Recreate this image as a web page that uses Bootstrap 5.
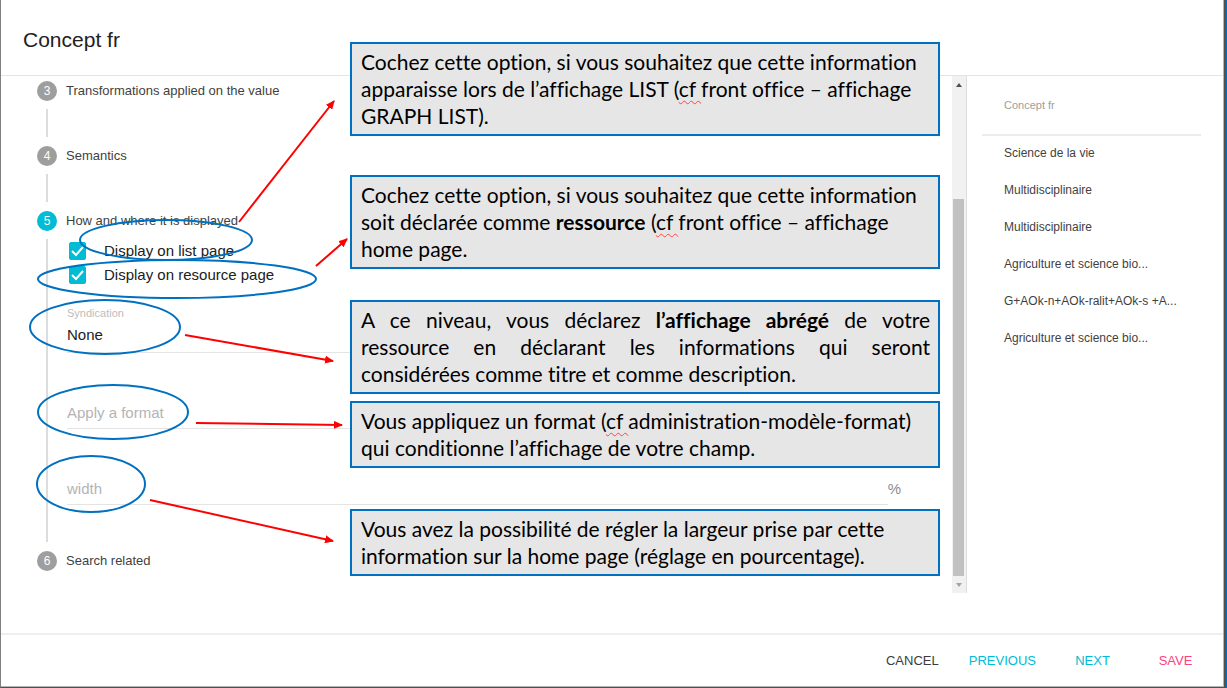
<!DOCTYPE html>
<html lang="fr">
<head>
<meta charset="utf-8">
<meta name="viewport" content="width=device-width, initial-scale=1">
<title>Concept fr</title>
<link href="https://cdn.jsdelivr.net/npm/bootstrap@5.3.0/dist/css/bootstrap.min.css" rel="stylesheet">
<style>
  body { font-family: "Liberation Sans", Arial, sans-serif; background: #0070c0; color: #212121; padding-right: 1px; }
  .editor { background: #fff; border: 1px solid #7f7f7f; border-width: 0 2px 1px 1px; border-right-color: #505050; border-bottom-color: #505050; box-shadow: inset -1px -1px #b4b4b4; }
  .editor-head { border-bottom: 1px solid #e4e4e4; height: 76px; padding: 4px 22px 0; margin-right: 1px; }
  .editor-head h1 { font-size: 21px; line-height: 28px; }
  .editor-foot { border-top: 2px solid #efefef; margin: 40px 1px 0 0; padding: 8px 6px 8px 0; }
  .flat { border: 0; border-radius: 2px; font-size: 13px; line-height: 24px; min-width: 83px; padding: 6px 15px; color: #3c3c3c; }
  .flat-cyan { color: #00bcd4; }
  .flat-pink { color: #ff4081; }

  .steps { padding-left: 36px; }
  .step-title { height: 30px; font-size: 13px; gap: 9px; color: #3f3f3f; }
  .step-no { width: 20px; height: 20px; border-radius: 50%; background: #9e9e9e; color: #fff; font-size: 12px; line-height: 20px; text-align: center; }
  .step-no.on { background: #00bcd4; }
  .step-line { margin: 3px 0 4px 9px; border-left: 2px solid #dcdcdc; min-height: 28px; }
  .step-body { padding: 0 20px 37px 19px; }

  .tick { gap: 18px; height: 24px; padding-left: 2px; font-size: 15px; }
  .tick .form-check-input { width: 17px; height: 18px; margin: 0; border-radius: 2px; border-color: #00bcd4; }
  .tick .form-check-input:checked { background-color: #00bcd4; background-size: 17px; background-image: url("data:image/svg+xml,%3csvg xmlns='http://www.w3.org/2000/svg' viewBox='0 0 17 18'%3e%3cpath d='M3 9l4 4L14 5' fill='none' stroke='%23fff' stroke-width='2'/%3e%3c/svg%3e"); }
  .field-label { font-size: 11px; line-height: 20px; color: #bdbdbd; }
  .field { border: 0; border-bottom: 1px solid #e4e4e4; border-radius: 0; padding: 0; height: 32px; font-size: 15px; line-height: 24px; background: none; color: #212121; }
  .field::placeholder { color: #b4b4b4; }
  .field-gap { margin-top: 44px; }
  .field-first { margin-top: 16px; }
  .field-pick { height: 30px; padding-bottom: 5px; appearance: none; }
  .unit { font-size: 15px; color: #8c8c8c; padding-right: 31px; }

  .bar { width: 15px; background: #f1f1f1; border-right: 1px solid #dedede; }
  .bar-end { height: 17px; }
  .bar-space { flex: 106 1 0; }
  .bar-thumb { flex: 377 1 0; background: #c1c1c1; margin: 0 2px 0 1px; }

  .preview { width: 257px; padding: 0 23px 0 15px; }
  .preview table { font-size: 12px; color: #3f3f3f; }
  .preview th { height: 59px; font-size: 11px; font-weight: 400; color: #9e9e9e; border-bottom: 2px solid #ececec; padding: 0 22px; }
  .preview td { height: 37px; padding: 0 0 2px 22px; max-width: 0; }

  /* Explanatory layer laid over the form */
  .marks { left: 0; top: 0; pointer-events: none; }
  .notes { left: 349px; top: 42px; width: 590px; font-family: Lato, sans-serif; font-size: 21px; line-height: 27px; font-variant-ligatures: none; color: #000; }
  .note { background: #e7e6e6; border: 2px solid #0070c0; padding: 4px 8px 5px 9px; margin: 0; white-space: nowrap; }
  .full-line { display: block; white-space: normal; text-align: justify; text-align-last: justify; }
  .note + .note { margin-top: 39px; }
  .note + .note-wide { margin-top: 31px; }
  .note-wide + .note { margin-top: 7px; }
  .note-wide + .note + .note { margin-top: 41px; }
  .typo { text-decoration: underline wavy #f44 1px; text-underline-offset: 3px; text-decoration-skip-ink: none; }
</style>
</head>
<body>
<div class="editor position-relative d-flex flex-column min-vh-100">
  <header class="editor-head d-flex align-items-center">
    <h1 class="fw-normal m-0">Concept fr</h1>
  </header>

  <main class="d-flex flex-grow-1">
    <section class="steps flex-grow-1">
      <div class="step-title d-flex align-items-center"><span class="step-no">3</span>Transformations applied on the value</div>
      <div class="step-line"></div>
      <div class="step-title d-flex align-items-center"><span class="step-no">4</span>Semantics</div>
      <div class="step-line"></div>
      <div class="step-title d-flex align-items-center"><span class="step-no on">5</span>How and where it is displayed</div>
      <div class="step-line">
        <form class="step-body">
          <div class="tick d-flex align-items-center">
            <input class="form-check-input" type="checkbox" id="onList" checked>
            <label for="onList">Display on list page</label>
          </div>
          <div class="tick d-flex align-items-center">
            <input class="form-check-input" type="checkbox" id="onResource" checked>
            <label for="onResource">Display on resource page</label>
          </div>
          <div class="field-first">
            <label class="field-label d-block" for="syndication">Syndication</label>
            <select class="field field-pick w-100 d-block" id="syndication"><option>None</option></select>
          </div>
          <input class="field field-gap w-100 d-block" type="text" placeholder="Apply a format" aria-label="Apply a format">
          <div class="field-gap d-flex align-items-center">
            <input class="field flex-grow-1" type="text" placeholder="width" aria-label="width">
            <span class="unit">%</span>
          </div>
        </form>
      </div>
      <div class="step-title d-flex align-items-center"><span class="step-no">6</span>Search related</div>
    </section>

    <div class="bar d-flex flex-column" aria-hidden="true">
      <div class="bar-end d-flex align-items-center justify-content-center"><svg width="6" height="4"><path d="M0 4h6L3 0z" fill="#505050"/></svg></div>
      <div class="bar-space"></div>
      <div class="bar-thumb"></div>
      <div class="bar-end d-flex align-items-center justify-content-center"><svg width="6" height="4"><path d="M0 0h6L3 4z" fill="#a3a3a3"/></svg></div>
    </div>

    <aside class="preview">
      <table class="w-100">
        <thead><tr><th scope="col">Concept fr</th></tr></thead>
        <tbody>
          <tr><td>Science de la vie</td></tr>
          <tr><td>Multidisciplinaire</td></tr>
          <tr><td>Multidisciplinaire</td></tr>
          <tr><td>Agriculture et science bio...</td></tr>
          <tr><td class="text-nowrap">G+AOk-n+AOk-ralit+AOk-s +A...</td></tr>
          <tr><td>Agriculture et science bio...</td></tr>
        </tbody>
      </table>
    </aside>
  </main>

  <footer class="editor-foot d-flex justify-content-end">
    <button type="button" class="btn flat">CANCEL</button>
    <button type="button" class="btn flat flat-cyan">PREVIOUS</button>
    <button type="button" class="btn flat flat-cyan">NEXT</button>
    <button type="button" class="btn flat flat-pink">SAVE</button>
  </footer>

  <div class="notes position-absolute">
    <p class="note">Cochez cette option, si vous souhaitez que cette information<br>apparaisse lors de l’affichage LIST (<span class="typo">cf </span>front office – affichage<br>GRAPH LIST).</p>
    <p class="note">Cochez cette option, si vous souhaitez que cette information<br>soit déclarée comme <b>ressource</b> (<span class="typo">cf </span>front office – affichage<br>home page.</p>
    <p class="note note-wide"><span class="full-line">A ce niveau, vous déclarez <b>l’affichage abrégé</b> de votre</span> <span class="full-line">ressource en déclarant les informations qui seront</span> considérées comme titre et comme description.</p>
    <p class="note">Vous appliquez un format (<span class="typo">cf </span>administration-modèle-format)<br>qui conditionne l’affichage de votre champ.</p>
    <p class="note">Vous avez la possibilité de régler la largeur prise par cette<br>information sur la home page (réglage en pourcentage).</p>
  </div>

  <svg class="marks position-absolute" width="350" height="600" aria-hidden="true">
    <defs>
      <marker id="tip" markerUnits="userSpaceOnUse" markerWidth="9" markerHeight="8" refX="8" refY="4" orient="auto"><path d="M0 0L9 4L0 8z" fill="#f00"/></marker>
    </defs>
    <g fill="none" stroke="#0070c0" stroke-width="2">
      <ellipse cx="165" cy="240" rx="86" ry="20"/>
      <ellipse cx="176" cy="279" rx="139" ry="19"/>
      <ellipse cx="104" cy="327" rx="75" ry="27"/>
      <ellipse cx="112" cy="412" rx="75" ry="27"/>
      <ellipse cx="90" cy="484" rx="54" ry="28"/>
    </g>
    <g stroke="#f00" stroke-width="2">
      <path d="M238 222L333 101" marker-end="url(#tip)"/>
      <path d="M315 266L346 239" marker-end="url(#tip)"/>
      <path d="M184 335L332 361" marker-end="url(#tip)"/>
      <path d="M195 423L341 425" marker-end="url(#tip)"/>
      <path d="M149 500L332 541" marker-end="url(#tip)"/>
    </g>
  </svg>
</div>
<script src="https://cdn.jsdelivr.net/npm/bootstrap@5.3.0/dist/js/bootstrap.bundle.min.js"></script>
</body>
</html>
